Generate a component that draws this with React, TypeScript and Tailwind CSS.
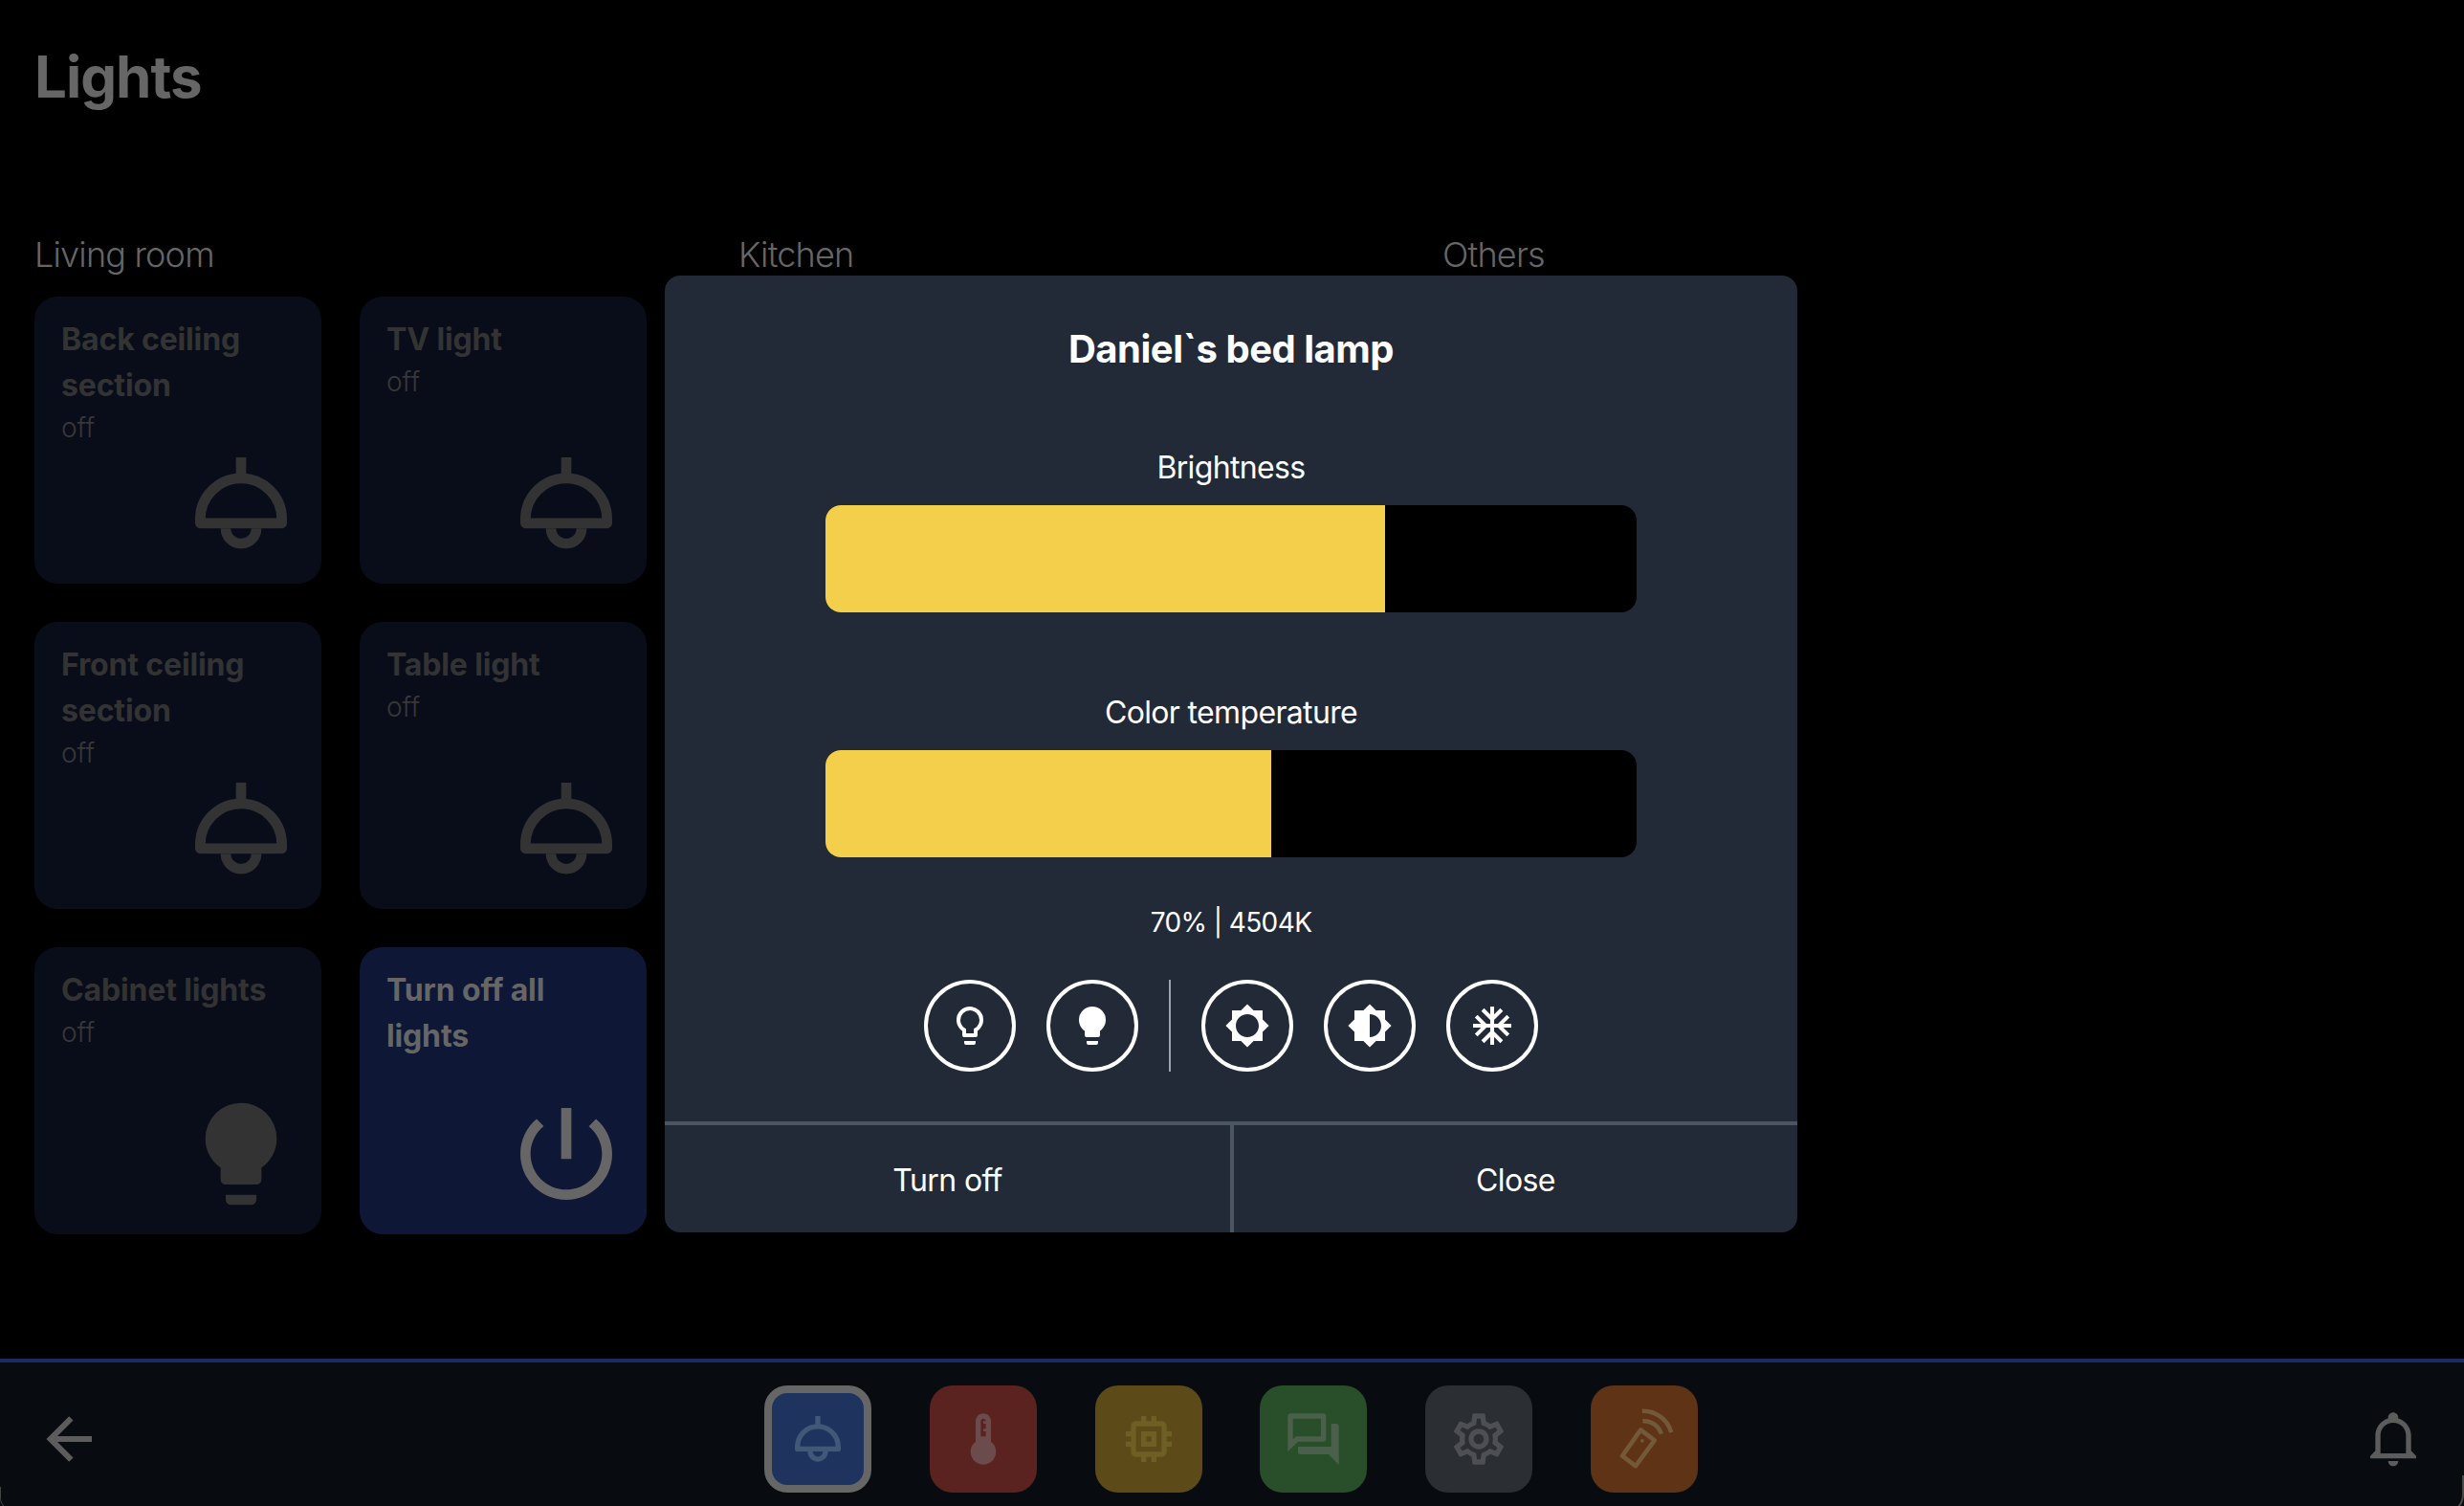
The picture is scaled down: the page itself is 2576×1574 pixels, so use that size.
import React from 'react';
import { MdOutlineSettings } from 'react-icons/md';

const FONT = 'font-["Inter","Liberation_Sans",sans-serif]';

const paths = {
  bulb: 'M12,2A7,7 0 0,0 5,9C5,11.38 6.19,13.47 8,14.74V17A1,1 0 0,0 9,18H15A1,1 0 0,0 16,17V14.74C17.81,13.47 19,11.38 19,9A7,7 0 0,0 12,2M9,21A1,1 0 0,0 10,22H14A1,1 0 0,0 15,21V20H9V21Z',
  bulbOutline: 'M12,2A7,7 0 0,1 19,9C19,11.38 17.81,13.47 16,14.74V17A1,1 0 0,1 15,18H9A1,1 0 0,1 8,17V14.74C6.19,13.47 5,11.38 5,9A7,7 0 0,1 12,2M9,21V20H15V21A1,1 0 0,1 14,22H10A1,1 0 0,1 9,21M12,4A5,5 0 0,0 7,9C7,11.05 8.23,12.81 10,13.58V16H14V13.58C15.77,12.81 17,11.05 17,9A5,5 0 0,0 12,4Z',
  power: 'M13 3h-2v10h2V3zm4.83 2.17-1.42 1.42C17.99 7.86 19 9.81 19 12c0 3.87-3.13 7-7 7s-7-3.13-7-7c0-2.19 1.01-4.14 2.58-5.42L6.17 5.17C4.23 6.82 3 9.26 3 12c0 4.97 4.03 9 9 9s9-4.03 9-9c0-2.74-1.23-5.18-3.17-6.83z',
  sun: 'M20 15.31 23.31 12 20 8.69V4h-4.69L12 .69 8.69 4H4v4.69L.69 12 4 15.31V20h4.69L12 23.31 15.31 20H20v-4.69zM12 18c-3.31 0-6-2.69-6-6s2.69-6 6-6 6 2.69 6 6-2.69 6-6 6z',
  sunHalf: 'M20 15.31 23.31 12 20 8.69V4h-4.69L12 .69 8.69 4H4v4.69L.69 12 4 15.31V20h4.69L12 23.31 15.31 20H20v-4.69zM12 18V6c3.31 0 6 2.69 6 6s-2.69 6-6 6z',
  snow: 'M22 11h-4.17l3.24-3.24-1.41-1.42L15 11h-2V9l4.66-4.66-1.42-1.41L13 6.17V2h-2v4.17L7.76 2.93 6.34 4.34 11 9v2H9L4.34 6.34 2.93 7.76 6.17 11H2v2h4.17l-3.24 3.24 1.41 1.42L9 13h2v2l-4.66 4.66 1.42 1.41L11 17.83V22h2v-4.17l3.24 3.24 1.42-1.41L13 15v-2h2l4.66 4.66 1.41-1.42L17.83 13H22v-2z',
  thermometer: 'M15 13V5c0-1.66-1.34-3-3-3S9 3.34 9 5v8c-1.21.91-2 2.37-2 4 0 2.76 2.24 5 5 5s5-2.24 5-5c0-1.63-.79-3.09-2-4zm-4-8c0-.55.45-1 1-1s1 .45 1 1h-1v1h1v2h-1v1h1v2h-2V5z',
  chip: 'M15 9H9v6h6V9zm-2 4h-2v-2h2v2zm8-2V9h-2V7c0-1.1-.9-2-2-2h-2V3h-2v2h-2V3H9v2H7c-1.1 0-2 .9-2 2v2H3v2h2v2H3v2h2v2c0 1.1.9 2 2 2h2v2h2v-2h2v2h2v-2h2c1.1 0 2-.9 2-2v-2h2v-2h-2v-2h2zm-4 6H7V7h10v10z',
  forum: 'M15 4v7H5.17l-.59.59-.58.58V4h11m1-2H3c-.55 0-1 .45-1 1v14l4-4h10c.55 0 1-.45 1-1V3c0-.55-.45-1-1-1zm5 4h-2v9H6v2c0 .55.45 1 1 1h11l4 4V7c0-.55-.45-1-1-1z',
  back: 'M20,11V13H8L13.5,18.5L12.08,19.92L4.16,12L12.08,4.08L13.5,5.5L8,11H20Z',
  bell: 'M10 21H14C14 22.1 13.1 23 12 23S10 22.1 10 21M21 19V20H3V19L5 17V11C5 7.9 7 5.2 10 4.3V4C10 2.9 10.9 2 12 2S14 2.9 14 4V4.3C17 5.2 19 7.9 19 11V17L21 19M17 11C17 8.2 14.8 6 12 6S7 8.2 7 11V18H17V11Z',
};

const Icon = ({ d, className }: { d: string; className: string }) => (
  <svg viewBox="0 0 24 24" fill="currentColor" className={className}>
    <path d={d} />
  </svg>
);

const CeilingLight = ({ className }: { className: string }) => (
  <svg viewBox="0 0 24 24" fill="none" stroke="currentColor" strokeWidth="2" strokeLinejoin="round" className={className}>
    <path d="M12 3V7" />
    <path d="M4 15.9V15.1A8 8 0 0 1 20 15.1V15.9Z" />
    <path d="M9 16.9A3 3 0 0 0 15 16.9" />
  </svg>
);

const RemoteIcon = ({ className }: { className: string }) => (
  <svg viewBox="0 0 24 24" fill="none" stroke="currentColor" strokeWidth="1.7" strokeLinejoin="round" className={className}>
    <path d="M3.4 18.6L8.6 22.6L16 12.5L10.6 8.4Z" />
    <circle cx="11.2" cy="12.7" r="0.7" fill="currentColor" stroke="none" />
    <path d="M11.4 5A7 7 0 0 1 18.7 10" />
    <path d="M11.2 1A11.5 11.5 0 0 1 22.6 9.4" />
  </svg>
);

type Light = { name: React.ReactNode; state?: string; icon: React.ReactNode; active?: boolean };

const lamp = <CeilingLight className="w-32 h-32 text-[#333333]" />;

const lights: Light[] = [
  { name: <>Back ceiling<br />section</>, state: 'off', icon: lamp },
  { name: 'TV light', state: 'off', icon: lamp },
  { name: <>Front ceiling<br />section</>, state: 'off', icon: lamp },
  { name: 'Table light', state: 'off', icon: lamp },
  { name: 'Cabinet lights', state: 'off', icon: <Icon d={paths.bulb} className="w-32 h-32 text-[#333333]" /> },
  { name: <>Turn off all<br />lights</>, icon: <Icon d={paths.power} className="w-32 h-32 text-[#666666]" />, active: true },
];

const LightCard = ({ light }: { light: Light }) => (
  <div className={`relative w-[300px] h-[300px] rounded-3xl pt-[21px] px-7 ${light.active ? 'bg-[#0f1736]' : 'bg-[#090d1a]'}`}>
    <div className={`text-[32px] leading-[48px] font-bold tracking-[-0.15px] ${light.active ? 'text-[#666666]' : 'text-[#333333]'}`}>{light.name}</div>
    {light.state && <div className="-mt-px text-[28px] leading-[42px] font-light text-[#383838]">{light.state}</div>}
    <div className="absolute right-5 bottom-5">{light.icon}</div>
  </div>
);

const Slider = ({ label, value, top }: { label: string; value: number; top: string }) => (
  <div className={`flex flex-col items-center ${top}`}>
    <div className="h-12 text-[32px] leading-[50px] tracking-[-0.65px] text-white">{label}</div>
    <div className="mt-4 w-[848px] h-[112px] rounded-2xl bg-black overflow-hidden">
      <div className="h-full bg-[#f3cf4b]" style={{ width: `${value}%` }} />
    </div>
  </div>
);

const RoundButton = ({ d }: { d: string }) => (
  <div className="w-24 h-24 rounded-full border-4 border-white flex items-center justify-center">
    <Icon d={d} className="w-12 h-12 text-white" />
  </div>
);

const tileBase = 'w-[112px] h-[112px] rounded-3xl flex items-center justify-center';
const headingClass = 'h-[54px] text-[36px] leading-[57px] font-light tracking-[-0.8px] text-[#666666]';

export default function App() {
  return (
    <div className={`relative w-[2576px] h-[1574px] bg-black overflow-hidden flex flex-col ${FONT}`}>
      <main className="flex-1 pl-9 pt-[50px]">
        <h1 className="text-[60px] leading-[60px] font-bold tracking-[-1px] text-[#666666]">Lights</h1>
        <div className="mt-[128px] flex gap-24">
          <section className="w-[640px]">
            <h2 className={`${headingClass} mb-[18px]`}>Living room</h2>
            <div className="grid grid-cols-2 gap-10">
              {lights.map((l, i) => <LightCard key={i} light={l} />)}
            </div>
          </section>
          <section className="w-[640px]">
            <h2 className={headingClass}>Kitchen</h2>
          </section>
          <section className="w-[640px]">
            <h2 className={headingClass}>Others</h2>
          </section>
        </div>
      </main>

      <footer className="h-[154px] border-t-4 border-[#1b2c64] bg-[#080c11] flex justify-between pl-9 pr-[42px]">
        <div className="w-[72px] flex items-center pt-[10px]">
          <Icon d={paths.back} className="w-[72px] h-[72px] text-[#5c5c5c]" />
        </div>
        <div className="flex gap-[60.8px] pt-6 pr-[4px]">
          <div className={`${tileBase} bg-[#1f335f] border-8 border-[#666666]`}>
            <CeilingLight className="w-16 h-16 text-[#425878]" />
          </div>
          <div className={`${tileBase} bg-[#5a2320]`}>
            <Icon d={paths.thermometer} className="w-16 h-16 text-[#6b4b4b]" />
          </div>
          <div className={`${tileBase} bg-[#5c4b18]`}>
            <Icon d={paths.chip} className="w-16 h-16 text-[#6e5f24]" />
          </div>
          <div className={`${tileBase} bg-[#284f2a]`}>
            <Icon d={paths.forum} className="w-16 h-16 text-[#4a604a]" />
          </div>
          <div className={`${tileBase} bg-[#2b2e33]`}>
            <MdOutlineSettings className="w-16 h-16 text-[#4d4f52]" />
          </div>
          <div className={`${tileBase} bg-[#5f3416]`}>
            <RemoteIcon className="w-16 h-16 text-[#73583a]" />
          </div>
        </div>
        <div className="w-16 flex items-center pt-2">
          <Icon d={paths.bell} className="w-16 h-16 text-[#5c5c5c]" />
        </div>
      </footer>

      {/* dialog sits over the dimmed page */}
      <div className="absolute left-[695px] top-[288px] w-[1184px] h-[1000px] rounded-2xl bg-[#222a37] flex flex-col overflow-hidden">
        <div className="flex-1 flex flex-col items-center pt-[47px]">
          <h3 className="text-[40px] leading-[60px] font-bold tracking-[-0.5px] text-white">Daniel`s bed lamp</h3>
          <Slider label="Brightness" value={69} top="mt-[69px]" />
          <Slider label="Color temperature" value={55} top="mt-20" />
          <div className="mt-[47px] text-[28px] leading-[42px] tracking-[-0.6px] text-white">70% | 4504K</div>
          <div className="mt-[39px] flex gap-8">
            <RoundButton d={paths.bulbOutline} />
            <RoundButton d={paths.bulb} />
            <div className="w-0.5 h-24 bg-[#9ca3af]" />
            <RoundButton d={paths.sun} />
            <RoundButton d={paths.sunHalf} />
            <RoundButton d={paths.snow} />
          </div>
        </div>
        <div className="h-[116px] border-t-4 border-[#4b5563] flex text-[32px] tracking-[-0.6px] text-white">
          <div className="w-[595px] pt-[3px] border-r-4 border-[#4b5563] flex items-center justify-center">Turn off</div>
          <div className="flex-1 pt-[3px] flex items-center justify-center">Close</div>
        </div>
      </div>

      {/* faint screen-corner arcs */}
      <div className="absolute left-0 -bottom-1 w-6 h-6 rounded-bl-xl border-l border-b border-[#444444]" />
      <div className="absolute right-0 -bottom-2 w-10 h-10 rounded-br-[20px] border-r-2 border-b-2 border-[#4a4a4a]" />
    </div>
  );
}
